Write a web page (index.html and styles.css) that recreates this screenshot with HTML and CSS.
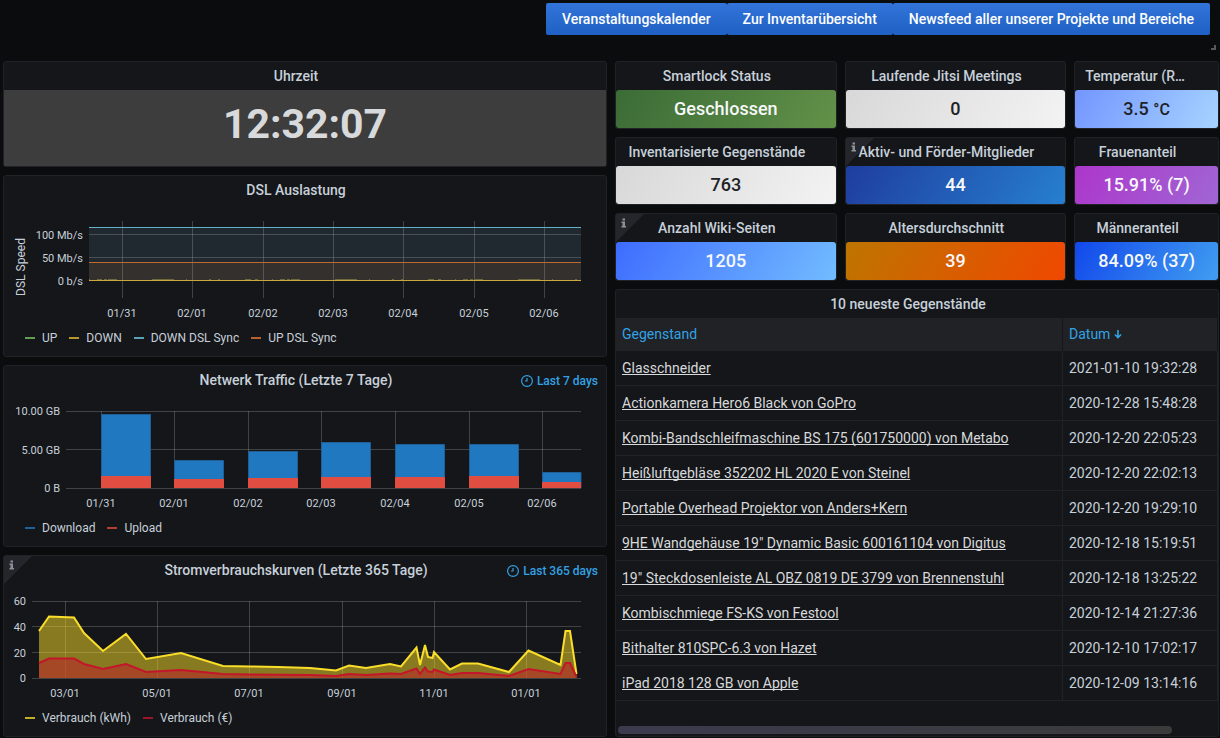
FILE: index.html
```html
<!DOCTYPE html>
<html lang="de">

<head>
    <meta charset="UTF-8">
    <meta name="viewport" content="width=device-width, initial-scale=1.0">
    <title>Dashboard</title>
    <link rel="stylesheet" href="styles.css">
</head>

<body>
    <nav class="links">
        <a class="btn" href="#kalender">Veranstaltungskalender</a>
        <a class="btn" href="#inventar">Zur Inventarübersicht</a>
        <a class="btn" href="#newsfeed">Newsfeed aller unserer Projekte und Bereiche</a>
        <span class="resize-handle"></span>
    </nav>

    <main class="dashboard">
        <div class="column">
            <section class="panel">
                <h2 class="panel-title">Uhrzeit</h2>
                <div class="clock">12:32:07</div>
            </section>

            <section class="panel">
                <h2 class="panel-title">DSL Auslastung</h2>
                <svg class="chart" viewBox="0 0 602 120">
                    <rect x="85" y="23" width="492" height="54" fill="#1f292f" />
                    <rect x="85" y="58" width="492" height="19" fill="#33302e" />
                    <path class="grid" d="M85 30.5H577M85 53.5H577M85 76.5H577M118.5 17V94M188.5 17V94M259.5 17V94M329.5 17V94M399.5 17V94M470.5 17V94M540.5 17V94" />
                    <path class="line" stroke="#64b0c8" d="M85 23.5H577" />
                    <path class="line" stroke="#c2692e" d="M85 58.5H577" />
                    <path class="line" stroke="#c9a93b" d="M85 76.5H577" />
                    <path class="line" stroke="#6e683f" stroke-dasharray="1 7 5 2 3 1 9 35 22 12 1 22 2 7 2 25 6 4 3 14" d="M85 75.5H577" />
                    <text class="axis-title" transform="rotate(-90)" x="-63" y="21">DSL Speed</text>
                    <g class="y-labels">
                        <text x="79" y="35">100 Mb/s</text>
                        <text x="79" y="58">50 Mb/s</text>
                        <text x="79" y="81">0 b/s</text>
                    </g>
                    <g class="x-labels">
                        <text x="118" y="113">01/31</text>
                        <text x="188" y="113">02/01</text>
                        <text x="259" y="113">02/02</text>
                        <text x="329" y="113">02/03</text>
                        <text x="399" y="113">02/04</text>
                        <text x="470" y="113">02/05</text>
                        <text x="540" y="113">02/06</text>
                    </g>
                </svg>
                <ul class="legend">
                    <li class="green">UP</li>
                    <li class="gold">DOWN</li>
                    <li class="cyan">DOWN DSL Sync</li>
                    <li class="orange">UP DSL Sync</li>
                </ul>
            </section>

            <section class="panel">
                <h2 class="panel-title">Netwerk Traffic (Letzte 7 Tage)</h2>
                <div class="time-range">
                    <svg class="clock-icon" viewBox="0 0 12 12">
                        <circle cx="6" cy="6" r="5.4" />
                        <path d="M6 3V6H4" />
                    </svg>
                    Last 7 days
                </div>
                <svg class="chart" viewBox="0 0 602 120">
                    <path class="grid" d="M62 17.5H577M62 55.5H577M62 94.5H577M97.5 17V94M170.5 17V94M244.5 17V94M317.5 17V94M391.5 17V94M465.5 17V94M538.5 17V94" />
                    <path fill="#2078c1" stroke="#205f95" d="M97.5 94V20.5H146.5V94M170.5 94V66.5H219.5V94M244.5 94V57.5H293.5V94M317.5 94V48.5H366.5V94M391.5 94V50.5H440.5V94M465.5 94V50.5H514.5V94M538.5 94V78.5H577V94" />
                    <path fill="#e24d42" d="M97 94V82H147V94M170 94V85H220V94M244 94V84H294V94M317 94V83H367V94M391 94V83H441V94M465 94V82H515V94M538 94V88H577V94" />
                    <g class="y-labels">
                        <text x="56" y="21">10.00 GB</text>
                        <text x="56" y="60">5.00 GB</text>
                        <text x="56" y="98">0 B</text>
                    </g>
                    <g class="x-labels">
                        <text x="97" y="113">01/31</text>
                        <text x="170" y="113">02/01</text>
                        <text x="244" y="113">02/02</text>
                        <text x="317" y="113">02/03</text>
                        <text x="391" y="113">02/04</text>
                        <text x="465" y="113">02/05</text>
                        <text x="538" y="113">02/06</text>
                    </g>
                </svg>
                <ul class="legend">
                    <li class="blue">Download</li>
                    <li class="red">Upload</li>
                </ul>
            </section>

            <section class="panel">
                <svg class="info" viewBox="0 0 28 28">
                    <path fill="#24262b" d="M0 0H28L0 28Z" />
                    <path fill="#8e9297" d="M6.5 4.5H9V6.5H6.5ZM5.5 7.5H9V12H10V13.5H5.5V12H6.5V9H5.5Z" />
                </svg>
                <h2 class="panel-title">Stromverbrauchskurven (Letzte 365 Tage)</h2>
                <div class="time-range">
                    <svg class="clock-icon" viewBox="0 0 12 12">
                        <circle cx="6" cy="6" r="5.4" />
                        <path d="M6 3V6H4" />
                    </svg>
                    Last 365 days
                </div>
                <svg class="chart" viewBox="0 0 602 120">
                    <path class="grid" d="M28 17.5H577M28 42.5H577M28 68.5H577M28 94.5H577M61.5 17V94M153.5 17V94M245.5 17V94M338.5 17V94M430.5 17V94M522.5 17V94" />
                    <path fill="#fade2a" fill-opacity=".5" d="M35 94V47L45 32.5L70 33.5L80 49L99 67L122 50L142 75L177 69L219 82L246 82.5L274 83L306 84L332 86.5L345 81.5L362 84L386 80L397 82.5L412.5 63.5L416 81L421 61L424 73L428.5 74L430 68L446 85.5L458 79.5L474 79.5L505 88L524.5 66.5L556.5 81L561.5 47L566 47L572.5 90V94Z" />
                    <path fill="#c4162a" fill-opacity=".5" d="M35 94V79L45 74.5L70 74.5L80 80L99 85L122 80L142 88L177 86L219 90L246 90.5L306 91L332 92L345 90L362 91L386 89.5L397 90L412.5 84.5L416 90L421 83.5L424 87.5L428.5 88L430 85.5L446 91L458 89L474 89L505 92L524.5 85L556.5 90L561.5 79L566 79L572.5 93V94Z" />
                    <path class="curve" stroke="#fade2a" d="M35 47L45 32.5L70 33.5L80 49L99 67L122 50L142 75L177 69L219 82L246 82.5L274 83L306 84L332 86.5L345 81.5L362 84L386 80L397 82.5L412.5 63.5L416 81L421 61L424 73L428.5 74L430 68L446 85.5L458 79.5L474 79.5L505 88L524.5 66.5L556.5 81L561.5 47L566 47L572.5 90" />
                    <path class="curve" stroke="#c4162a" d="M35 79L45 74.5L70 74.5L80 80L99 85L122 80L142 88L177 86L219 90L246 90.5L306 91L332 92L345 90L362 91L386 89.5L397 90L412.5 84.5L416 90L421 83.5L424 87.5L428.5 88L430 85.5L446 91L458 89L474 89L505 92L524.5 85L556.5 90L561.5 79L566 79L572.5 93" />
                    <g class="y-labels">
                        <text x="22" y="21">60</text>
                        <text x="22" y="47">40</text>
                        <text x="22" y="73">20</text>
                        <text x="22" y="98">0</text>
                    </g>
                    <g class="x-labels">
                        <text x="61" y="113">03/01</text>
                        <text x="153" y="113">05/01</text>
                        <text x="245" y="113">07/01</text>
                        <text x="338" y="113">09/01</text>
                        <text x="430" y="113">11/01</text>
                        <text x="522" y="113">01/01</text>
                    </g>
                </svg>
                <ul class="legend">
                    <li class="yellow">Verbrauch (kWh)</li>
                    <li class="crimson">Verbrauch (€)</li>
                </ul>
            </section>
        </div>

        <div class="column">
            <div class="stats">
                <section class="panel">
                    <h2 class="panel-title">Smartlock Status</h2>
                    <div class="stat stat-green">Geschlossen</div>
                </section>
                <section class="panel">
                    <h2 class="panel-title">Laufende Jitsi Meetings</h2>
                    <div class="stat stat-white">0</div>
                </section>
                <section class="panel">
                    <h2 class="panel-title">Temperatur (Raum)</h2>
                    <div class="stat stat-ice">3.5&nbsp;<small>°C</small></div>
                </section>
                <section class="panel">
                    <h2 class="panel-title">Inventarisierte Gegenstände</h2>
                    <div class="stat stat-white">763</div>
                </section>
                <section class="panel">
                    <svg class="info" viewBox="0 0 28 28">
                        <path fill="#24262b" d="M0 0H28L0 28Z" />
                        <path fill="#8e9297" d="M6.5 4.5H9V6.5H6.5ZM5.5 7.5H9V12H10V13.5H5.5V12H6.5V9H5.5Z" />
                    </svg>
                    <h2 class="panel-title">Aktiv- und Förder-Mitglieder</h2>
                    <div class="stat stat-navy">44</div>
                </section>
                <section class="panel">
                    <h2 class="panel-title">Frauenanteil</h2>
                    <div class="stat stat-purple">15.91% (7)</div>
                </section>
                <section class="panel">
                    <svg class="info" viewBox="0 0 28 28">
                        <path fill="#24262b" d="M0 0H28L0 28Z" />
                        <path fill="#8e9297" d="M6.5 4.5H9V6.5H6.5ZM5.5 7.5H9V12H10V13.5H5.5V12H6.5V9H5.5Z" />
                    </svg>
                    <h2 class="panel-title">Anzahl Wiki-Seiten</h2>
                    <div class="stat stat-sky">1205</div>
                </section>
                <section class="panel">
                    <h2 class="panel-title">Altersdurchschnitt</h2>
                    <div class="stat stat-orange">39</div>
                </section>
                <section class="panel">
                    <h2 class="panel-title">Männeranteil</h2>
                    <div class="stat stat-blue">84.09% (37)</div>
                </section>
            </div>

            <section class="panel table-panel">
                <h2 class="panel-title">10 neueste Gegenstände</h2>
                <table>
                    <thead>
                        <tr>
                            <th>Gegenstand</th>
                            <th class="date">Datum
                                <svg class="sort-icon" viewBox="0 0 8 10">
                                    <path d="M4 1V8.5M1 5.5L4 8.5L7 5.5" />
                                </svg>
                            </th>
                        </tr>
                    </thead>
                    <tbody>
                        <tr><td><a href="#1">Glasschneider</a></td><td>2021-01-10 19:32:28</td></tr>
                        <tr><td><a href="#2">Actionkamera Hero6 Black von GoPro</a></td><td>2020-12-28 15:48:28</td></tr>
                        <tr><td><a href="#3">Kombi-Bandschleifmaschine BS 175 (601750000) von Metabo</a></td><td>2020-12-20 22:05:23</td></tr>
                        <tr><td><a href="#4">Heißluftgebläse 352202 HL 2020 E von Steinel</a></td><td>2020-12-20 22:02:13</td></tr>
                        <tr><td><a href="#5">Portable Overhead Projektor von Anders+Kern</a></td><td>2020-12-20 19:29:10</td></tr>
                        <tr><td><a href="#6">9HE Wandgehäuse 19" Dynamic Basic 600161104 von Digitus</a></td><td>2020-12-18 15:19:51</td></tr>
                        <tr><td><a href="#7">19" Steckdosenleiste AL OBZ 0819 DE 3799 von Brennenstuhl</a></td><td>2020-12-18 13:25:22</td></tr>
                        <tr><td><a href="#8">Kombischmiege FS-KS von Festool</a></td><td>2020-12-14 21:27:36</td></tr>
                        <tr><td><a href="#9">Bithalter 810SPC-6.3 von Hazet</a></td><td>2020-12-10 17:02:17</td></tr>
                        <tr><td><a href="#10">iPad 2018 128 GB von Apple</a></td><td>2020-12-09 13:14:16</td></tr>
                    </tbody>
                </table>
                <div class="scrollbar"></div>
            </section>
        </div>
    </main>
</body>

</html>
```
FILE: styles.css
```css
:root {
    --background: #0b0c0e;
    --panel: #141619;
    --border: #202226;
    --text: #c7d0d9;
    --link: #33a2e5;
}

* {
    box-sizing: border-box;
}

body {
    margin: 0;
    font-family: Roboto, "Liberation Sans", sans-serif;
    font-size: 14px;
    color: var(--text);
    background-color: var(--background);
}

/* top buttons */

.links {
    position: relative;
    display: flex;
    flex-wrap: wrap;
    justify-content: flex-end;
    padding: 3px 10px 18px;
    margin-bottom: 8px;
}

.btn {
    padding: 0 16px;
    line-height: 32px;
    font-weight: 500;
    color: #ffffff;
    text-decoration: none;
    border-radius: 2px;
    background: linear-gradient(#3274d9, #1f60c4);
}

.resize-handle {
    position: absolute;
    right: 4px;
    bottom: 3px;
    width: 5px;
    height: 5px;
    border-right: 2px solid #58595b;
    border-bottom: 2px solid #58595b;
}

/* panels */

.dashboard {
    display: grid;
    grid-template-columns: 1fr 1fr;
    gap: 8px;
    padding: 0 1px 0 3px;
}

.column {
    display: flex;
    flex-direction: column;
    gap: 8px;
    min-width: 0;
}

.panel {
    position: relative;
    min-width: 0;
    background-color: var(--panel);
    border: 1px solid var(--border);
    border-radius: 3px;
}

.panel-title {
    position: relative;
    margin: 0;
    padding: 0 28px 0 10px;
    overflow: hidden;
    font-size: 14px;
    font-weight: 500;
    line-height: 28px;
    text-align: center;
    text-overflow: ellipsis;
    white-space: nowrap;
}

.info {
    position: absolute;
    top: 0;
    left: 0;
    width: 28px;
    height: 28px;
}

.time-range {
    position: absolute;
    top: 0;
    right: 8px;
    display: flex;
    align-items: center;
    gap: 4px;
    font-size: 12px;
    font-weight: 500;
    line-height: 30px;
    color: var(--link);
}

.clock-icon {
    width: 12px;
    height: 12px;
    fill: none;
    stroke: var(--link);
    stroke-width: 1.2;
}

.clock {
    padding: 9px 0 17px;
    font-size: 41px;
    font-weight: 700;
    line-height: 50px;
    text-align: center;
    color: #d8d9da;
    background-color: #3d3d3d;
}

/* charts */

.chart {
    display: block;
    width: 100%;
    font-size: 11px;
    fill: var(--text);
}

.grid {
    fill: none;
    stroke: #c8c8c8;
    stroke-opacity: 0.25;
}

.line {
    fill: none;
}

.curve {
    fill: none;
    stroke-width: 2;
}

.axis-title {
    font-size: 12px;
    text-anchor: middle;
}

.y-labels {
    text-anchor: end;
}

.x-labels {
    text-anchor: middle;
}

.legend {
    display: flex;
    flex-wrap: wrap;
    gap: 0 12px;
    margin: 0;
    padding: 0 21px 4px;
    list-style: none;
    font-size: 12px;
    line-height: 28px;
}

.legend li {
    display: flex;
    align-items: center;
    gap: 7px;
}

.legend li::before {
    content: "";
    width: 10px;
    height: 2px;
    background-color: var(--series);
}

.green { --series: #629e51; }
.gold { --series: #b8962e; }
.cyan { --series: #56a4b5; }
.orange { --series: #b9622f; }
.blue { --series: #1c6199; }
.red { --series: #b33f37; }
.yellow { --series: #c4ae26; }
.crimson { --series: #9b1526; }

/* stats */

.stats {
    display: grid;
    grid-template-columns: 222fr 222fr 145fr;
    gap: 8px;
}

.stat {
    font-size: 18px;
    font-weight: 500;
    line-height: 38px;
    text-align: center;
    color: #f7f8fa;
    border-radius: 3px;
}

.stat small {
    font-size: 16px;
    line-height: 1;
}

.stat-green { background: linear-gradient(120deg, #3b6c36, #629149); }
.stat-white { color: #202226; background: linear-gradient(120deg, #d8d8d8, #f3f3f3); }
.stat-ice { color: #202226; background: linear-gradient(120deg, #7395ff, #a6d4ff); }
.stat-navy { background: linear-gradient(120deg, #1f3d9f, #267fcf); }
.stat-purple { background: linear-gradient(120deg, #ad36cb, #a066d4); }
.stat-sky { background: linear-gradient(120deg, #3e6cff, #72bcff); }
.stat-orange { background: linear-gradient(120deg, #bd7500, #f04800); }
.stat-blue { background: linear-gradient(120deg, #1148eb, #419ef1); }

/* table */

.table-panel {
    display: flex;
    flex: 1;
    flex-direction: column;
}

table {
    width: 100%;
    border-collapse: separate;
    border-spacing: 0;
    table-layout: fixed;
}

th,
td {
    padding: 0 6px;
    text-align: left;
    border-right: 1px solid var(--border);
    white-space: nowrap;
}

th {
    height: 33px;
    padding-bottom: 2px;
    font-weight: 400;
    color: var(--link);
    background-color: #202226;
    border-right-color: var(--panel);
}

td {
    height: 35px;
    border-bottom: 1px solid var(--border);
}

td a {
    color: #d8d9da;
    text-decoration: underline;
    text-decoration-skip-ink: none;
}

.date {
    width: 155px;
}

.sort-icon {
    width: 8px;
    height: 10px;
    fill: none;
    stroke: var(--link);
    stroke-width: 1.6;
}

.scrollbar {
    width: 92%;
    height: 8px;
    margin: auto 0 2px 2px;
    border-radius: 4px;
    background: linear-gradient(90deg, #3a3b4d, #3a3a3b);
}

@media (max-width: 800px) {
    .dashboard {
        grid-template-columns: 1fr;
    }
}
```
